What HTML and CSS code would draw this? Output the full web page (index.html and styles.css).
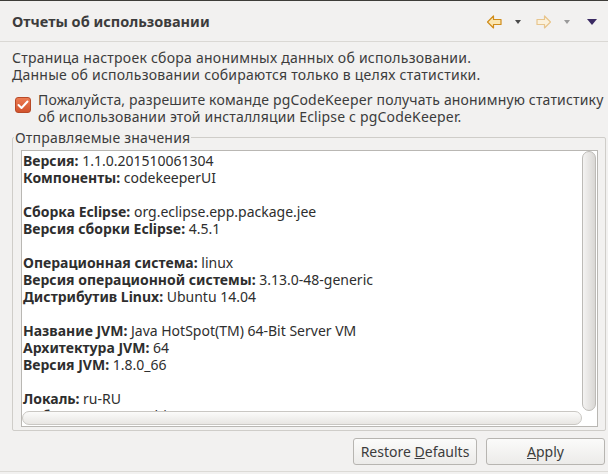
FILE: index.html
```html
<!DOCTYPE html>
<html lang="ru">
<head>
<meta charset="utf-8">
<title>Отчеты об использовании</title>
<link rel="stylesheet" href="styles.css">
</head>
<body>
<div class="topline"></div>
<header class="hdr">
  <h1 class="title">Отчеты об использовании</h1>
  <div class="tools">
    <svg class="arrow" width="15" height="14" viewBox="0 0 15 14"><path d="M0.5 7 L6.5 1 L6.5 4.5 L14 4.5 L14 9.5 L6.5 9.5 L6.5 13 Z" fill="#fbe6b0" stroke="#d08c1a" stroke-width="1.2" stroke-linejoin="round"/></svg>
    <svg class="drop" width="6" height="4" viewBox="0 0 6 4"><path d="M0 0 L6 0 L3 4 Z" fill="#4a4a4a"/></svg>
    <svg class="arrow fwd" width="15" height="14" viewBox="0 0 15 14"><path d="M14.5 7 L8.5 1 L8.5 4.5 L1 4.5 L1 9.5 L8.5 9.5 L8.5 13 Z" fill="#fbf1dc" stroke="#e8c58c" stroke-width="1.2" stroke-linejoin="round"/></svg>
    <svg class="drop" width="6" height="4" viewBox="0 0 6 4"><path d="M0 0 L6 0 L3 4 Z" fill="#9a9a9a"/></svg>
    <svg class="menu" width="10" height="6" viewBox="0 0 10 6"><path d="M0 0 L10 0 L5 6 Z" fill="#3b2a63"/></svg>
  </div>
</header>
<main class="page">
  <p class="desc">Страница настроек сбора анонимных данных об использовании.<br>Данные об использовании собираются только в целях статистики.</p>
  <label class="check">
    <span class="box"><svg width="12" height="10" viewBox="0 0 12 10"><path d="M1.5 5 L4.5 8 L10.5 1.5" fill="none" stroke="#fff" stroke-width="2" stroke-linecap="round" stroke-linejoin="round"/></svg></span>
    <span class="check-text">Пожалуйста, разрешите команде pgCodeKeeper получать анонимную статистику<br>об использовании этой инсталляции Eclipse с pgCodeKeeper.</span>
  </label>
  <fieldset class="group">
    <legend class="legend">Отправляемые значения</legend>
    <div class="area">
      <div class="content">
        <div><b>Версия:</b> 1.1.0.201510061304</div>
        <div><b>Компоненты:</b> codekeeperUI</div>
        <div class="gap"></div>
        <div><b>Сборка Eclipse:</b> org.eclipse.epp.package.jee</div>
        <div><b>Версия сборки Eclipse:</b> 4.5.1</div>
        <div class="gap"></div>
        <div><b>Операционная система:</b> linux</div>
        <div><b>Версия операционной системы:</b> 3.13.0-48-generic</div>
        <div><b>Дистрибутив Linux:</b> Ubuntu 14.04</div>
        <div class="gap"></div>
        <div><b>Название JVM:</b> Java HotSpot(TM) 64-Bit Server VM</div>
        <div><b>Архитектура JVM:</b> 64</div>
        <div><b>Версия JVM:</b> 1.8.0_66</div>
        <div class="gap"></div>
        <div><b>Локаль:</b> ru-RU</div>
        <div><b>Набор команд:</b> 64 bit</div>
      </div>
      <div class="vscroll"><div class="vthumb"></div></div>
      <div class="hscroll"><div class="hthumb"></div></div>
      <div class="corner"></div>
    </div>
  </fieldset>
  <div class="buttons">
    <button class="btn restore">Restore <u>D</u>efaults</button>
    <button class="btn apply"><u>A</u>pply</button>
  </div>
</main>
<div class="bottomline"></div>
</body>
</html>
```

FILE: styles.css
```css
html, body {
  margin: 0;
  padding: 0;
}
body {
  width: 608px;
  height: 474px;
  overflow: hidden;
  background: #f2f1f0;
  color: #3c3c3c;
  font-family: "Noto Sans", "DejaVu Sans", sans-serif;
  font-size: 14px;
  line-height: 17px;
}
.topline {
  height: 1px;
  background: #3e3d39;
}
.hdr {
  height: 41px;
  border-bottom: 1px solid #dad8d4;
  display: flex;
  align-items: center;
  padding: 0 0 0 12px;
  box-sizing: border-box;
}
.title {
  margin: 0;
  font-size: 14.5px;
  font-weight: bold;
  flex: 1;
  padding-top: 1px;
}
.tools {
  display: flex;
  align-items: center;
  padding-right: 11px;
  padding-top: 2px;
}
.tools .arrow { display: block; margin-left: 0; }
.tools .drop { display: block; margin-left: 13px; }
.tools .fwd { margin-left: 15px; }
.tools .menu { display: block; margin-left: 17px; }

.page {
  padding: 7px 2px 0 12px;
}
.desc {
  margin: 0;
  letter-spacing: 0.25px;
}
.check {
  display: flex;
  align-items: flex-start;
  margin-top: 8px;
}
.box {
  width: 16px;
  height: 16px;
  margin: 6px 0 0 3px;
  border-radius: 3px;
  background: linear-gradient(#ec7b52, #d2532d);
  border: 1px solid #b84a28;
  box-sizing: border-box;
  display: flex;
  align-items: center;
  justify-content: center;
  flex: none;
}
.box svg { display: block; }
.check-text {
  margin-left: 7px;
  white-space: nowrap;
  letter-spacing: 0.17px;
}
.group {
  margin: 4px 0 0 0;
  padding: 4px 7px 3px 8px;
  border: 1px solid #cfcdc9;
  border-radius: 2px;
}
.legend {
  padding: 0 1px;
  margin-left: -7px;
  line-height: 17px;
  letter-spacing: 0.2px;
}
.area {
  height: 275px;
  background: #fff;
  border: 1px solid #b9b7b3;
  display: grid;
  grid-template-columns: 1fr 15px;
  grid-template-rows: 1fr 15px;
}
.content {
  overflow: hidden;
  padding: 1px 0 0 1px;
  white-space: nowrap;
  color: #2e2e2e;
}
.content b { color: #2e2e2e; }
.gap { height: 17px; }
.vscroll {
  padding: 0 1px 0 0;
}
.vthumb {
  height: 100%;
  border: 1px solid #bdbbb7;
  border-radius: 7px;
  background: linear-gradient(to right, #f4f3f2, #d9d7d4);
  box-sizing: border-box;
}
.hscroll {
  padding: 0 0 1px 0;
}
.hthumb {
  height: 100%;
  border: 1px solid #c9c7c3;
  border-radius: 7px;
  background: linear-gradient(#fbfbfa, #e8e6e3);
  box-sizing: border-box;
}
.corner { background: #fff; }

.buttons {
  display: flex;
  justify-content: flex-end;
  gap: 9px;
  margin-top: 7px;
  padding-right: 1px;
}
.btn {
  font-family: inherit;
  font-size: 14px;
  color: #3c3c3c;
  height: 27px;
  border: 1px solid #b7b5b1;
  border-radius: 3px;
  background: linear-gradient(#fbfbfa, #ecebe9);
  padding: 0;
}
.restore { width: 124px; }
.apply { width: 119px; }
.btn u { text-decoration: underline; }
.bottomline {
  position: absolute;
  left: 0;
  right: 0;
  top: 471px;
  height: 1px;
  background: #dcdad6;
}
```
